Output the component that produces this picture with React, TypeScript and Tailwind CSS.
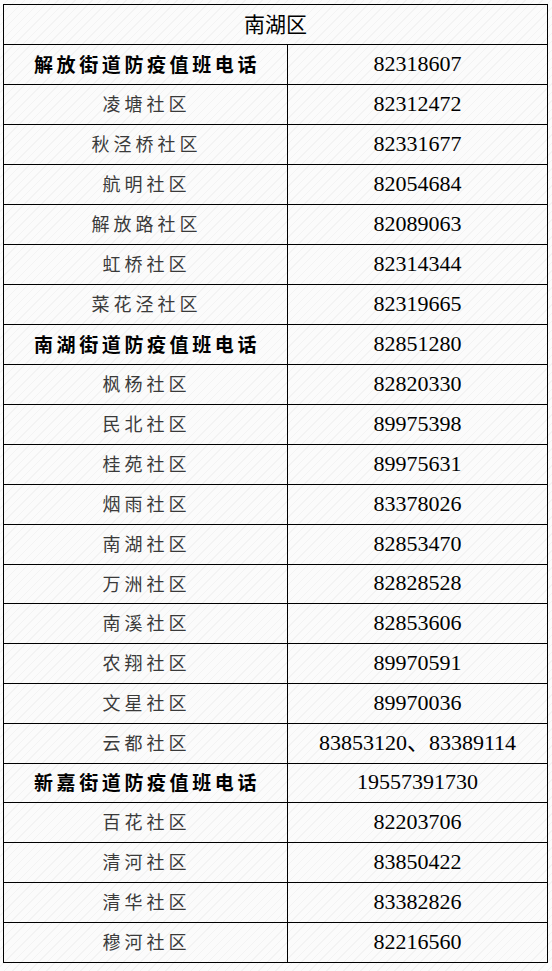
import React from "react";

type Row = { name: string; phone: string; bold?: boolean; h: string };

const rows: Row[] = [
  { name: "解放街道防疫值班电话", phone: "82318607", bold: true, h: "h-[40px]" },
  { name: "凌塘社区", phone: "82312472", h: "h-[40px]" },
  { name: "秋泾桥社区", phone: "82331677", h: "h-[40px]" },
  { name: "航明社区", phone: "82054684", h: "h-[40px]" },
  { name: "解放路社区", phone: "82089063", h: "h-[40px]" },
  { name: "虹桥社区", phone: "82314344", h: "h-[40px]" },
  { name: "菜花泾社区", phone: "82319665", h: "h-[40px]" },
  { name: "南湖街道防疫值班电话", phone: "82851280", bold: true, h: "h-[40px]" },
  { name: "枫杨社区", phone: "82820330", h: "h-[40px]" },
  { name: "民北社区", phone: "89975398", h: "h-[40px]" },
  { name: "桂苑社区", phone: "89975631", h: "h-[40px]" },
  { name: "烟雨社区", phone: "83378026", h: "h-[40px]" },
  { name: "南湖社区", phone: "82853470", h: "h-[40px]" },
  { name: "万洲社区", phone: "82828528", h: "h-[39px]" },
  { name: "南溪社区", phone: "82853606", h: "h-[40px]" },
  { name: "农翔社区", phone: "89970591", h: "h-[40px]" },
  { name: "文星社区", phone: "89970036", h: "h-[40px]" },
  { name: "云都社区", phone: "83853120、83389114", h: "h-[40px]" },
  { name: "新嘉街道防疫值班电话", phone: "19557391730", bold: true, h: "h-[39px]" },
  { name: "百花社区", phone: "82203706", h: "h-[40px]" },
  { name: "清河社区", phone: "83850422", h: "h-[40px]" },
  { name: "清华社区", phone: "83382826", h: "h-[40px]" },
  { name: "穆河社区", phone: "82216560", h: "h-[39px]" },
];

export default function App() {
  return (
    <div className="w-[552px] h-[971px] bg-[#f8f8f8] bg-[repeating-linear-gradient(135deg,#fbfbfb_0px,#fbfbfb_5px,#f3f3f3_5px,#f3f3f3_6px)] pt-[4px] pl-[3px]">
      <div className="w-[545px] border border-black">
        <div className="h-[40px] pb-[3px] border-b border-black flex items-center justify-center text-[21px] text-black font-[family-name:'Noto_Sans_CJK_SC',sans-serif] leading-none">
          南湖区
        </div>
        {rows.map((r, i) => (
          <div
            key={i}
            className={`${r.h} grid grid-cols-[284px_1fr] ${i < rows.length - 1 ? "border-b border-black" : ""}`}
          >
            <div className="border-r border-black flex items-center justify-center pb-[3px]">
              {r.bold ? (
                <span className="text-[19px] font-bold tracking-[3.6px] pl-[3px] text-black font-[family-name:'Noto_Sans_CJK_SC',sans-serif] leading-none">
                  {r.name}
                </span>
              ) : (
                <span className="text-[18px] tracking-[4px] pl-[2px] text-[#3a3a3a] font-[family-name:'Noto_Sans_CJK_SC',sans-serif] leading-none">
                  {r.name}
                </span>
              )}
            </div>
            <div className="flex items-center justify-center pb-[2px]">
              <span className="text-[22px] text-black font-[family-name:'Liberation_Serif','Noto_Sans_CJK_SC',serif] leading-none">
                {r.phone}
              </span>
            </div>
          </div>
        ))}
      </div>
    </div>
  );
}
